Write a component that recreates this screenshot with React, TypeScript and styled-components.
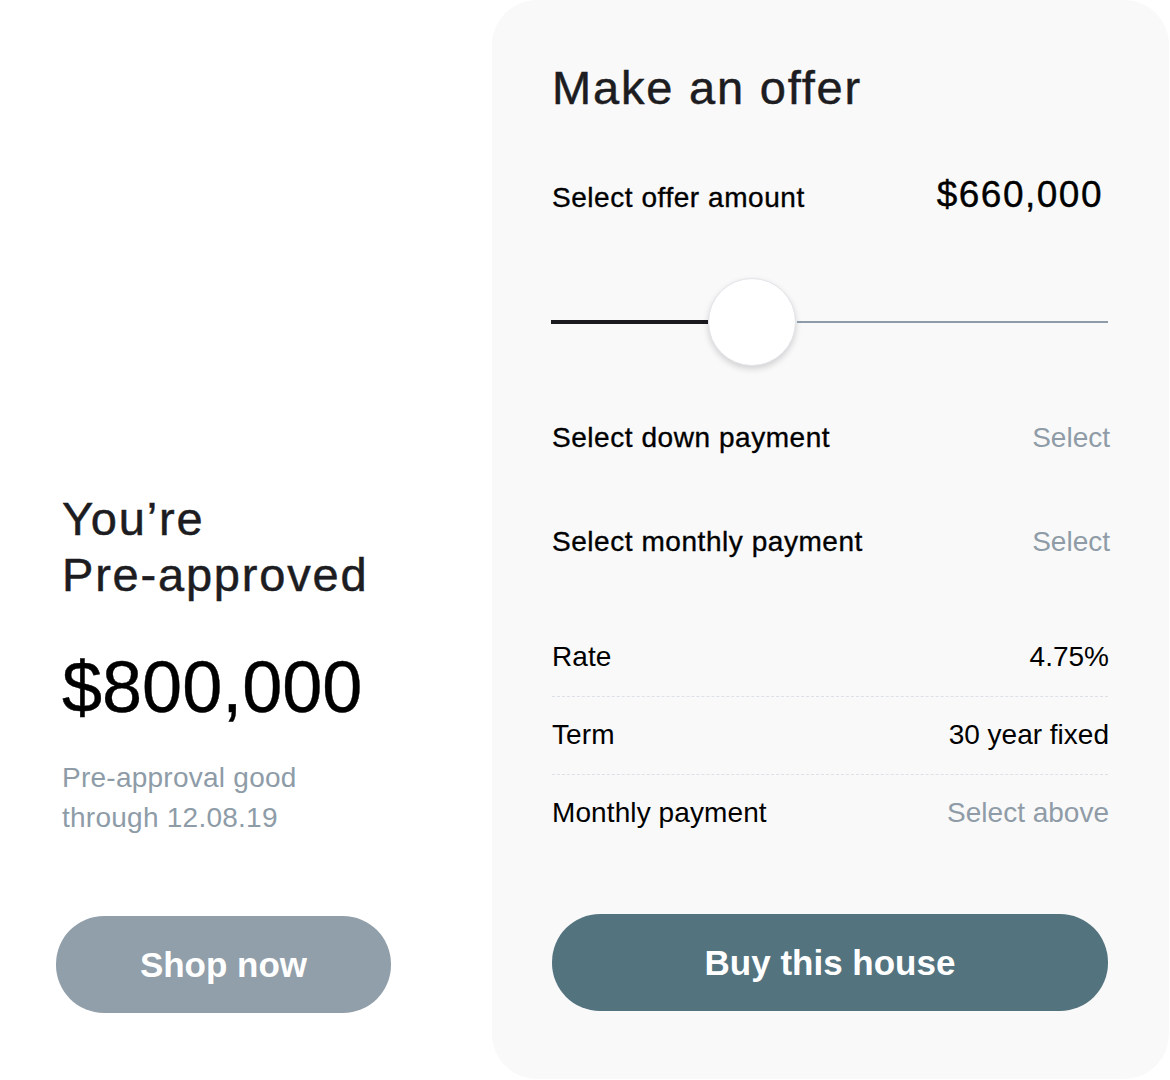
import React from 'react'
import styled, { createGlobalStyle } from 'styled-components'

const GlobalStyle = createGlobalStyle`
  html,
  body {
    margin: 0;
    padding: 0;
    background: #ffffff;
  }
  body {
    font-family: 'Liberation Sans', Arial, sans-serif;
    color: #1c1c21;
  }
`

const Page = styled.div`
  display: flex;
  align-items: flex-start;
  width: 1170px;
  height: 1080px;
`

const Summary = styled.section`
  display: flex;
  flex-direction: column;
  align-items: flex-start;
  width: 492px;
  flex-shrink: 0;
  box-sizing: border-box;
  padding: 491px 0 0 62px;
`

const Heading = styled.h1<{ gap?: number }>`
  margin: 0 0 ${props => props.gap ?? 0}px;
  font-size: 47px;
  line-height: 56px;
  font-weight: 400;
  letter-spacing: 1.8px;
  color: #1c1c21;
  -webkit-text-stroke: 0.5px #1c1c21;
`

const BigAmount = styled.div`
  font-size: 72px;
  line-height: 80px;
  color: #000000;
  margin-bottom: 31px;
  -webkit-text-stroke: 0.4px #000000;
`

const Note = styled.p`
  margin: 0 0 78px;
  font-size: 28px;
  line-height: 40px;
  letter-spacing: 0.25px;
  color: #8e9ca8;
`

const PillButton = styled.button<{ tone: 'muted' | 'primary'; wide?: boolean }>`
  display: flex;
  align-items: center;
  justify-content: center;
  height: 97px;
  width: ${props => (props.wide ? '100%' : '335px')};
  margin-left: ${props => (props.wide ? 0 : -6)}px;
  border: none;
  border-radius: 48px;
  padding: 0;
  background: ${props => (props.tone === 'primary' ? '#53737f' : '#919faa')};
  color: #ffffff;
  font-family: 'Liberation Sans', Arial, sans-serif;
  font-size: 35px;
  font-weight: 700;
  cursor: pointer;
`

const OfferCard = styled.section`
  display: flex;
  flex-direction: column;
  width: 677px;
  height: 1079px;
  flex-shrink: 0;
  box-sizing: border-box;
  padding: 60px 61px 0 60px;
  background: #f9f9f9;
  border-radius: 45px;
`

const Row = styled.div<{ gap?: number }>`
  display: flex;
  justify-content: space-between;
  align-items: baseline;
  margin-top: ${props => props.gap ?? 0}px;
`

const Label = styled.span<{ strong?: boolean }>`
  font-size: 28px;
  line-height: 32px;
  color: #000000;
  letter-spacing: ${props => (props.strong ? '0.55px' : '0.1px')};
  -webkit-text-stroke: ${props => (props.strong ? '0.35px #000000' : '0')};
`

const Value = styled.span<{ muted?: boolean; inset?: number }>`
  font-size: 28px;
  line-height: 32px;
  margin-right: ${props => props.inset ?? 0}px;
  color: ${props => (props.muted ? '#8f9ca7' : '#000000')};
`

const OfferAmount = styled.span`
  font-size: 37px;
  line-height: 48px;
  letter-spacing: 1.5px;
  margin-right: 5px;
  color: #000000;
  -webkit-text-stroke: 0.4px #000000;
`

const Slider = styled.div`
  display: flex;
  align-items: center;
  height: 88px;
  margin: 59px 0 0 -1px;
`

const TrackFill = styled.div`
  width: 157px;
  height: 4px;
  background: #1a1a1f;
`

const TrackRest = styled.div`
  flex: 1;
  height: 2px;
  margin-left: 1px;
  background: #8e9ba8;
`

const Thumb = styled.div`
  width: 86px;
  height: 86px;
  border-radius: 50%;
  background: #ffffff;
  border: 1px solid #e3e3ea;
  box-shadow: 0 3px 6px rgba(0, 0, 0, 0.16);
  flex-shrink: 0;
`

const Details = styled.div`
  display: flex;
  flex-direction: column;
  margin-top: 61px;
`

const DetailRow = styled.div`
  display: flex;
  justify-content: space-between;
  align-items: baseline;
  padding: 22px 0 23px;
  border-bottom: 1px dashed #dde1e6;

  &:last-child {
    border-bottom: none;
  }
`

const Actions = styled.div`
  margin-top: 62px;
`

const details = [
  { label: 'Rate', value: '4.75%' },
  { label: 'Term', value: '30 year fixed' },
  { label: 'Monthly payment', value: 'Select above', muted: true }
]

export default function App() {
  return (
    <>
      <GlobalStyle />
      <Page>
        <Summary>
          <Heading gap={44}>
            You’re
            <br />
            Pre-approved
          </Heading>
          <BigAmount>$800,000</BigAmount>
          <Note>
            Pre-approval good
            <br />
            through 12.08.19
          </Note>
          <PillButton tone="muted">Shop now</PillButton>
        </Summary>

        <OfferCard>
          <Heading>Make an offer</Heading>
          <Row gap={55}>
            <Label strong>Select offer amount</Label>
            <OfferAmount>$660,000</OfferAmount>
          </Row>

          <Slider>
            <TrackFill />
            <Thumb />
            <TrackRest />
          </Slider>

          <Row gap={56}>
            <Label strong>Select down payment</Label>
            <Value muted inset={-2}>
              Select
            </Value>
          </Row>
          <Row gap={72}>
            <Label strong>Select monthly payment</Label>
            <Value muted inset={-2}>
              Select
            </Value>
          </Row>

          <Details>
            {details.map(item => (
              <DetailRow key={item.label}>
                <Label>{item.label}</Label>
                <Value muted={item.muted} inset={-1}>
                  {item.value}
                </Value>
              </DetailRow>
            ))}
          </Details>

          <Actions>
            <PillButton tone="primary" wide>
              Buy this house
            </PillButton>
          </Actions>
        </OfferCard>
      </Page>
    </>
  )
}
